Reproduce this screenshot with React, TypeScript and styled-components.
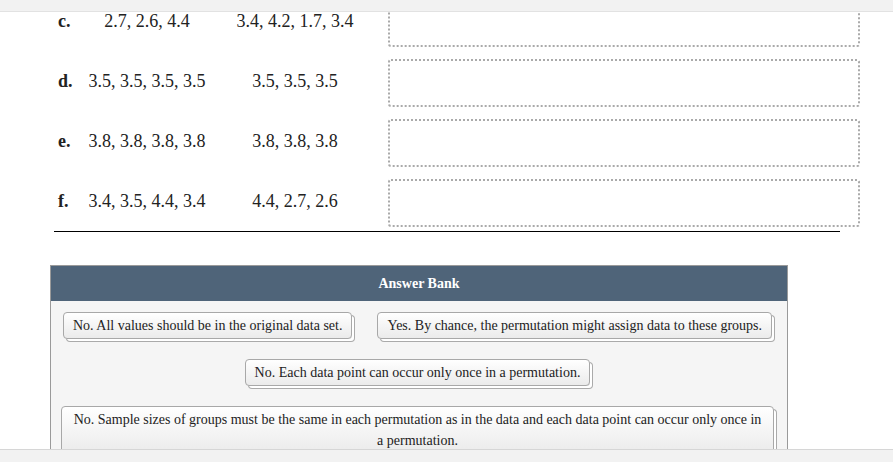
import React from "react";
import styled, { createGlobalStyle } from "styled-components";

const GlobalStyle = createGlobalStyle`
  html, body {
    margin: 0;
    padding: 0;
    height: 100%;
    overflow: hidden;
    background: #ffffff;
    font-family: "Liberation Serif", "Times New Roman", serif;
    color: #222;
  }
`;

const Page = styled.div`
  height: 100vh;
  display: flex;
  flex-direction: column;
`;

const TopBar = styled.div`
  flex-shrink: 0;
  height: 11px;
  background: #f2f2f2;
  border-bottom: 1px solid #e2e2e2;
`;

const BottomBar = styled.div`
  flex-shrink: 0;
  height: 12px;
  background: #f2f2f2;
  border-top: 1px solid #d6d6d6;
`;

const Scroller = styled.div`
  flex: 1;
  overflow: hidden;
`;

const Content = styled.div`
  margin-top: -21px;
`;

const Table = styled.div`
  margin-left: 54px;
  width: 786px;
  border-bottom: 1px solid #000;
`;

const Row = styled.div`
  display: grid;
  grid-template-columns: 30px 126px 170px 1fr;
  align-items: center;
  height: 60px;
  font-size: 18px;
  line-height: 18px;
`;

const Label = styled.div`
  font-weight: bold;
  padding-left: 4px;
`;

const Values = styled.div`
  text-align: center;
  white-space: nowrap;
`;

const DropBox = styled.div`
  box-sizing: border-box;
  width: 472px;
  height: 48px;
  margin: 4px 0 0 8px;
  border: 2px dotted #aaaaaa;
  border-radius: 3px;
  background: #fff;
`;

const Bank = styled.div`
  margin: 33px 0 0 50px;
  width: 738px;
  box-sizing: border-box;
  border: 1px solid #9a9a9a;
  background: #f5f5f5;
`;

const BankHeader = styled.div`
  height: 35px;
  background: #4f6479;
  color: #fff;
  font-weight: bold;
  font-size: 14px;
  display: flex;
  align-items: center;
  justify-content: center;
`;

const BankBody = styled.div`
  display: flex;
  flex-wrap: wrap;
  justify-content: center;
  gap: 20px 25px;
  padding: 11px 13px 20px 10px;
`;

const Chip = styled.div`
  box-sizing: border-box;
  padding: 2px 9px;
  font-size: 14px;
  line-height: 21px;
  text-align: center;
  color: #222;
  border: 1px solid #a8a8a8;
  border-radius: 4px;
  background: linear-gradient(#ffffff, #ebebeb);
  box-shadow: 3px 3px 0 -1px #ffffff, 3px 3px 0 0 #aaaaaa;
`;

const rows = [
  { label: "c.", a: "2.7, 2.6, 4.4", b: "3.4, 4.2, 1.7, 3.4" },
  { label: "d.", a: "3.5, 3.5, 3.5, 3.5", b: "3.5, 3.5, 3.5" },
  { label: "e.", a: "3.8, 3.8, 3.8, 3.8", b: "3.8, 3.8, 3.8" },
  { label: "f.", a: "3.4, 3.5, 4.4, 3.4", b: "4.4, 2.7, 2.6" },
];

const answers = [
  "No. All values should be in the original data set.",
  "Yes. By chance, the permutation might assign data to these groups.",
  "No. Each data point can occur only once in a permutation.",
  "No. Sample sizes of groups must be the same in each permutation as in the data and each data point can occur only once in a permutation.",
];

export default function App() {
  return (
    <>
      <GlobalStyle />
      <Page>
        <TopBar />
        <Scroller>
          <Content>
            <Table>
              {rows.map((r) => (
                <Row key={r.label}>
                  <Label>{r.label}</Label>
                  <Values>{r.a}</Values>
                  <Values>{r.b}</Values>
                  <DropBox />
                </Row>
              ))}
            </Table>
            <Bank>
              <BankHeader>Answer Bank</BankHeader>
              <BankBody>
                {answers.map((a) => (
                  <Chip key={a}>{a}</Chip>
                ))}
              </BankBody>
            </Bank>
          </Content>
        </Scroller>
        <BottomBar />
      </Page>
    </>
  );
}
